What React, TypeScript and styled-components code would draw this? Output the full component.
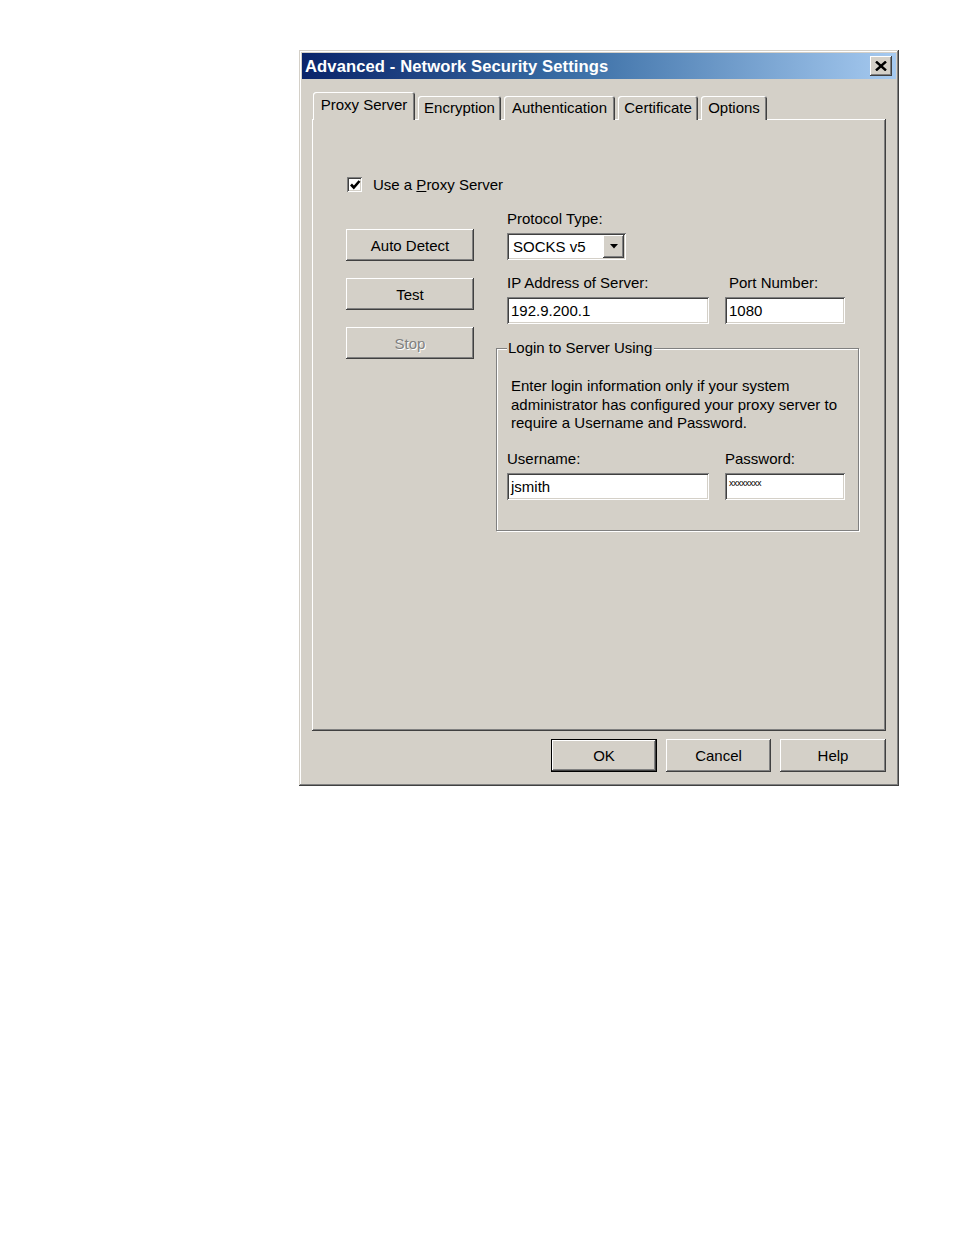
import { createGlobalStyle } from 'styled-components'
import styled from 'styled-components'

const GlobalStyle = createGlobalStyle`
  body {
    margin: 0;
    background: #ffffff;
    font-family: "Liberation Sans", Arial, sans-serif;
  }
`;

const face = '#d4d0c8';

const raised = `
  box-shadow:
    inset -1px -1px 0 #404040,
    inset 1px 1px 0 #ffffff,
    inset -2px -2px 0 #808080,
    inset 2px 2px 0 ${face};
`;

const sunken = `
  box-shadow:
    inset 1px 1px 0 #808080,
    inset -1px -1px 0 #ffffff,
    inset 2px 2px 0 #404040,
    inset -2px -2px 0 ${face};
`;

const Page = styled.div`
  padding: 50px 0 0 299px;
`;

const Window = styled.div`
  box-sizing: border-box;
  width: 600px;
  height: 736px;
  padding: 3px;
  background: ${face};
  display: flex;
  flex-direction: column;
  box-shadow:
    inset -1px -1px 0 #404040,
    inset 1px 1px 0 ${face},
    inset -2px -2px 0 #808080,
    inset 2px 2px 0 #ffffff;
`;

const TitleBar = styled.div`
  height: 26px;
  flex: none;
  display: flex;
  align-items: center;
  justify-content: space-between;
  padding: 0 4px 0 3px;
  background: linear-gradient(to right, #0a246a 0%, #3a6ea5 45%, #a6caf0 100%);
`;

const Title = styled.span`
  color: #ffffff;
  font-weight: bold;
  font-size: 16.6px;
  letter-spacing: 0.1px;
  margin-top: 2px;
`;

const CloseButton = styled.div`
  box-sizing: border-box;
  width: 22px;
  height: 20px;
  background: ${face};
  display: flex;
  align-items: center;
  justify-content: center;
  ${raised}
`;

const Body = styled.div`
  flex: 1;
  display: flex;
  flex-direction: column;
  padding: 13px 10px 11px 10px;
`;

const TabStrip = styled.div`
  display: flex;
  align-items: flex-end;
  height: 28px;
  margin-bottom: -1px;
  position: relative;
  z-index: 1;
`;

const Tab = styled.div<{ $w: number; $active?: boolean }>`
  box-sizing: border-box;
  width: ${(p) => p.$w}px;
  height: ${(p) => (p.$active ? 28 : 24)}px;
  margin-left: ${(p) => (p.$active ? 1 : 3)}px;
  background: ${face};
  border-radius: 3px 3px 0 0;
  display: flex;
  align-items: ${(p) => (p.$active ? 'flex-start' : 'center')};
  justify-content: center;
  padding-top: ${(p) => (p.$active ? 4 : 0)}px;
  padding-bottom: ${(p) => (p.$active ? 0 : 2)}px;
  font-size: 15px;
  color: #000;
  box-shadow:
    inset 1px 1px 0 #ffffff,
    inset -1px 0 0 #404040,
    inset -2px 0 0 #808080;
`;

const Panel = styled.div`
  flex: 1;
  box-sizing: border-box;
  padding: 58px 0 0 34px;
  ${raised}
`;

const CheckRow = styled.label`
  display: flex;
  align-items: center;
  height: 15px;
  margin-left: 1px;
  font-size: 15px;
  color: #000;
`;

const CheckBox = styled.span`
  box-sizing: border-box;
  width: 15px;
  height: 15px;
  background: #ffffff;
  display: flex;
  align-items: center;
  justify-content: center;
  margin-right: 11px;
  ${sunken}
`;

const MainRow = styled.div`
  display: flex;
  align-items: flex-start;
  margin-top: 18px;
`;

const ButtonColumn = styled.div`
  width: 128px;
  margin-top: 19px;
  display: flex;
  flex-direction: column;
  gap: 17px;
`;

const Button = styled.div<{ $disabled?: boolean; $default?: boolean; $w?: number }>`
  box-sizing: border-box;
  width: ${(p) => (p.$w ? `${p.$w}px` : '100%')};
  height: ${(p) => (p.$w ? 33 : 32)}px;
  background: ${face};
  display: flex;
  align-items: center;
  justify-content: center;
  font-size: 15px;
  color: ${(p) => (p.$disabled ? '#808080' : '#000')};
  text-shadow: ${(p) => (p.$disabled ? '1px 1px 0 #ffffff' : 'none')};
  border: ${(p) => (p.$default ? '1px solid #000' : 'none')};
  ${raised}
`;

const RightColumn = styled.div`
  width: 363px;
  margin-left: 22px;
`;

const Fields = styled.div`
  padding-left: 11px;
`;

const Label = styled.div<{ $indent?: number }>`
  font-size: 15px;
  line-height: 18px;
  color: #000;
  padding-left: ${(p) => p.$indent || 0}px;
`;

const Select = styled.div`
  box-sizing: border-box;
  width: 119px;
  height: 27px;
  margin-top: 5px;
  background: #ffffff;
  display: flex;
  align-items: center;
  justify-content: space-between;
  padding: 2px 2px 2px 6px;
  font-size: 15px;
  ${sunken}
`;

const DropButton = styled.div`
  box-sizing: border-box;
  width: 21px;
  height: 23px;
  background: ${face};
  display: flex;
  align-items: center;
  justify-content: center;
  ${raised}
`;

const FieldRow = styled.div<{ $top: number }>`
  display: flex;
  gap: 16px;
  margin-top: ${(p) => p.$top}px;
`;

const Field = styled.div<{ $w: number }>`
  width: ${(p) => p.$w}px;
`;

const Input = styled.div`
  box-sizing: border-box;
  height: 27px;
  margin-top: 5px;
  background: #ffffff;
  display: flex;
  align-items: center;
  padding-left: 4px;
  font-size: 15px;
  color: #000;
  ${sunken}
`;

const Stars = styled.span`
  font-size: 9px;
  letter-spacing: -0.5px;
  align-self: flex-start;
  margin-top: 5px;
`;

const GroupBox = styled.div`
  position: relative;
  margin-top: 24px;
  height: 183px;
  box-sizing: border-box;
  border: 1px solid #808080;
  box-shadow: inset 1px 1px 0 #ffffff, 1px 1px 0 #ffffff;
  padding: 28px 0 0 10px;
`;

const Legend = styled.span`
  position: absolute;
  top: -10px;
  left: 10px;
  padding: 0 2px 0 1px;
  background: ${face};
  font-size: 15px;
  line-height: 18px;
  color: #000;
`;

const Note = styled.p`
  margin: 0 0 0 4px;
  font-size: 15px;
  line-height: 18.5px;
  color: #000;
`;

const Footer = styled.div`
  display: flex;
  justify-content: flex-end;
  gap: 9px;
  margin-top: 8px;
`;

const tabs = [
  { label: 'Proxy Server', w: 102, active: true },
  { label: 'Encryption', w: 83 },
  { label: 'Authentication', w: 111 },
  { label: 'Certificate', w: 80 },
  { label: 'Options', w: 66 },
];

export default function App() {
  return (
    <Page>
      <GlobalStyle />
      <Window>
        <TitleBar>
          <Title>Advanced - Network Security Settings</Title>
          <CloseButton>
            <svg width="12" height="10" viewBox="0 0 12 10">
              <path d="M1 0.5 L11 9.5 M11 0.5 L1 9.5" stroke="#000" strokeWidth="2.4" />
            </svg>
          </CloseButton>
        </TitleBar>
        <Body>
          <TabStrip>
            {tabs.map((t) => (
              <Tab key={t.label} $w={t.w} $active={t.active}>
                {t.label}
              </Tab>
            ))}
          </TabStrip>
          <Panel>
            <CheckRow>
              <CheckBox>
                <svg width="12" height="12" viewBox="0 0 12 12">
                  <path d="M2 5.5 L4.8 8.5 L10.5 2" stroke="#000" strokeWidth="2.6" fill="none" />
                </svg>
              </CheckBox>
              <span>
                Use a <u>P</u>roxy Server
              </span>
            </CheckRow>
            <MainRow>
              <ButtonColumn>
                <Button>Auto Detect</Button>
                <Button>Test</Button>
                <Button $disabled>Stop</Button>
              </ButtonColumn>
              <RightColumn>
                <Fields>
                  <Label>Protocol Type:</Label>
                  <Select>
                    <span>SOCKS v5</span>
                    <DropButton>
                      <svg width="8" height="5" viewBox="0 0 8 5">
                        <path d="M0 0 H8 L4 4.5 Z" fill="#000" />
                      </svg>
                    </DropButton>
                  </Select>
                  <FieldRow $top={14}>
                    <Field $w={202}>
                      <Label>IP Address of Server:</Label>
                      <Input>192.9.200.1</Input>
                    </Field>
                    <Field $w={120}>
                      <Label $indent={4}>Port Number:</Label>
                      <Input>1080</Input>
                    </Field>
                  </FieldRow>
                </Fields>
                <GroupBox>
                  <Legend>Login to Server Using</Legend>
                  <Note>
                    Enter login information only if your system
                    <br />
                    administrator has configured your proxy server to
                    <br />
                    require a Username and Password.
                  </Note>
                  <FieldRow $top={17}>
                    <Field $w={202}>
                      <Label>Username:</Label>
                      <Input>jsmith</Input>
                    </Field>
                    <Field $w={120}>
                      <Label>Password:</Label>
                      <Input>
                        <Stars>xxxxxxxx</Stars>
                      </Input>
                    </Field>
                  </FieldRow>
                </GroupBox>
              </RightColumn>
            </MainRow>
          </Panel>
          <Footer>
            <Button $w={106} $default>OK</Button>
            <Button $w={105}>Cancel</Button>
            <Button $w={106}>Help</Button>
          </Footer>
        </Body>
      </Window>
    </Page>
  );
}
